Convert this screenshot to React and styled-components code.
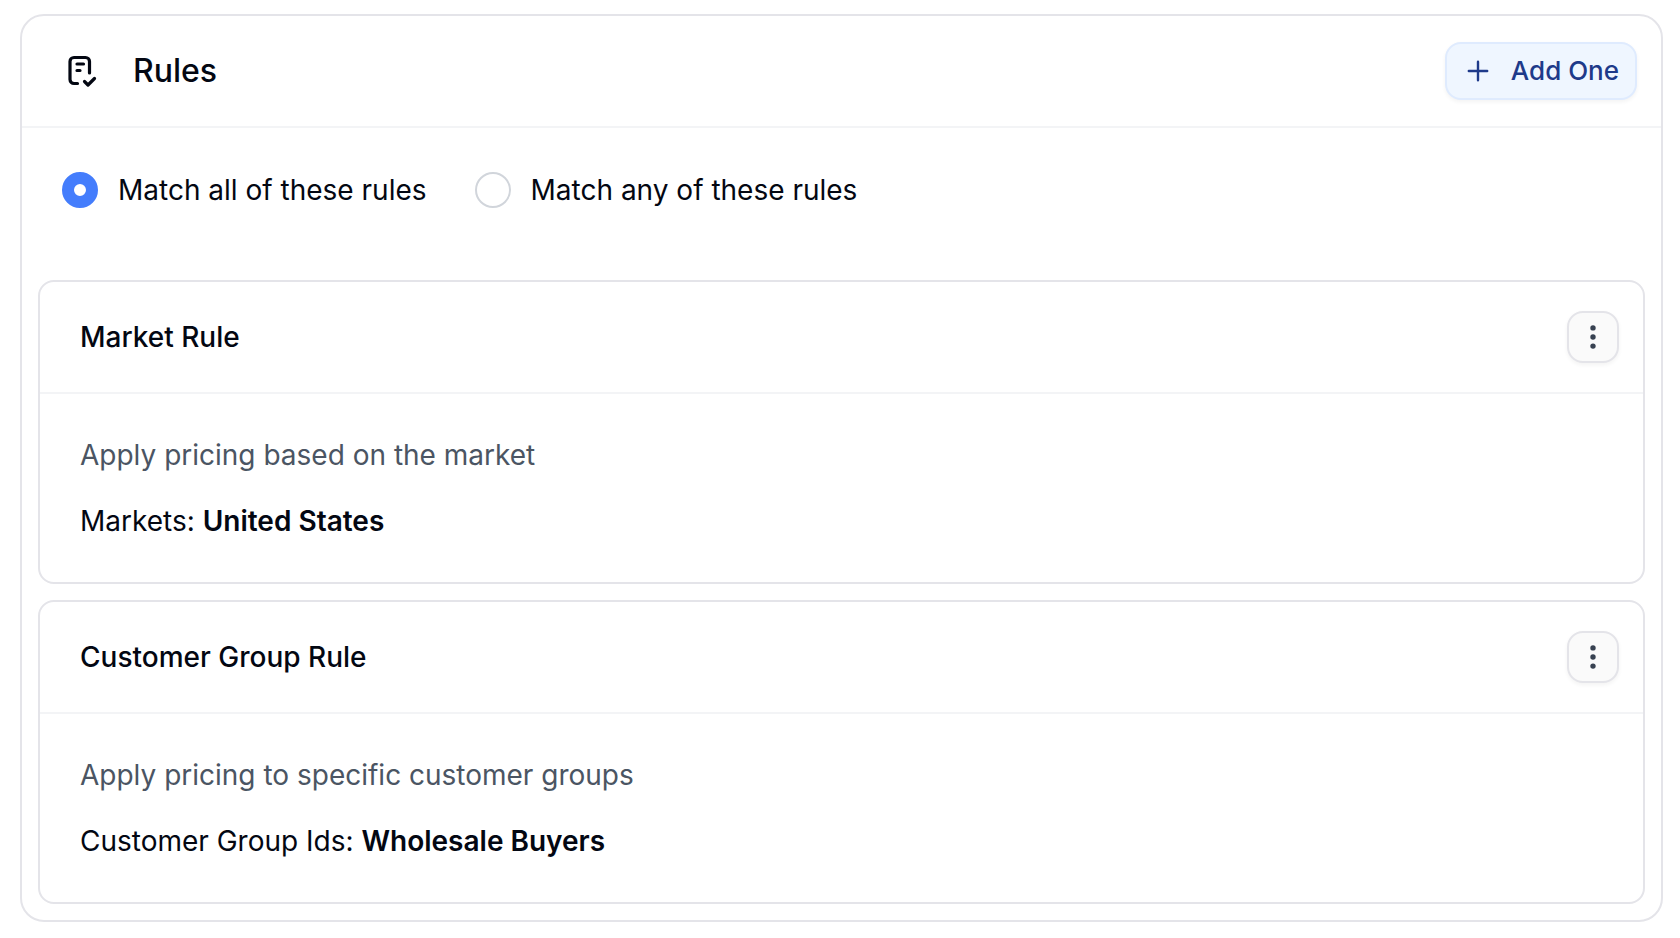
import { useState } from "react";
import styled, { createGlobalStyle } from "styled-components";

const rules = [
	{
		name: "Market Rule",
		description: "Apply pricing based on the market",
		label: "Markets",
		value: "United States",
	},
	{
		name: "Customer Group Rule",
		description: "Apply pricing to specific customer groups",
		label: "Customer Group Ids",
		value: "Wholesale Buyers",
	},
];

function RulesIcon() {
	return (
		<svg
			width="40"
			height="40"
			viewBox="0 0 40 40"
			fill="none"
			stroke="currentColor"
			strokeWidth="3.2"
			strokeLinecap="round"
			strokeLinejoin="round"
			aria-hidden="true"
		>
			<path d="M27.5 22V10.500a4 4 0 0 0-4-4h-11.500a4 4 0 0 0-4 4v18a4 4 0 0 0 4 4H15.500" />
			<path d="M15 13h6.500M15 19.500h3" />
			<path d="M22.500 30.500l3.500 3.500 6.500-6.500" />
		</svg>
	);
}

function PlusIcon() {
	return (
		<svg
			width="22"
			height="22"
			viewBox="0 0 22 22"
			fill="none"
			stroke="currentColor"
			strokeWidth="2.4"
			strokeLinecap="round"
			aria-hidden="true"
		>
			<path d="M11 1.800v18.400M1.800 11h18.400" />
		</svg>
	);
}

function DotsIcon() {
	return (
		<svg width="28" height="28" viewBox="0 0 28 28" fill="currentColor" aria-hidden="true">
			<circle cx="14" cy="4.900" r="2.7" />
			<circle cx="14" cy="14" r="2.7" />
			<circle cx="14" cy="23.100" r="2.7" />
		</svg>
	);
}

function RuleCard({ rule }) {
	return (
		<Rule>
			<Header>
				<h3>{rule.name}</h3>
				<MenuButton type="button" aria-label={`${rule.name} actions`}>
					<DotsIcon />
				</MenuButton>
			</Header>
			<RuleBody>
				<Description>{rule.description}</Description>
				<p>
					{rule.label}: <strong>{rule.value}</strong>
				</p>
			</RuleBody>
		</Rule>
	);
}

export default function App() {
	const [match, setMatch] = useState("all");
	return (
		<>
			<GlobalStyle />
			<Card>
				<Header>
					<Title>
						<RulesIcon />
						<h2>Rules</h2>
					</Title>
					<AddButton type="button">
						<PlusIcon />
						Add One
					</AddButton>
				</Header>
				<MatchOptions role="radiogroup" aria-label="Match rules">
					{["all", "any"].map((option) => (
						<Option key={option}>
							<Radio
								type="radio"
								name="match"
								value={option}
								checked={match === option}
								onChange={() => setMatch(option)}
							/>
							Match {option} of these rules
						</Option>
					))}
				</MatchOptions>
				<RuleList>
					{rules.map((rule) => (
						<RuleCard key={rule.name} rule={rule} />
					))}
				</RuleList>
			</Card>
		</>
	);
}

const GlobalStyle = createGlobalStyle`
	* {
		box-sizing: border-box;
	}
	body {
		margin: 0;
		background: #ffffff;
		color: #030712;
		font-family: Inter, "Liberation Sans", sans-serif;
		font-size: 28px;
		line-height: 42px;
	}
	h2, h3, p {
		margin: 0;
	}
	h2, h3 {
		font-weight: 500;
	}
	h2 {
		font-size: 32px;
	}
	h3 {
		font-size: 28px;
	}
	strong {
		font-weight: 600;
	}
	svg {
		display: block;
		flex-shrink: 0;
	}
`;

const Card = styled.section`
	margin: 14px 17px 16px 20px;
	border: 2px solid #e4e4e9;
	border-radius: 24px;
`;

const Header = styled.header`
	display: flex;
	align-items: center;
	justify-content: space-between;
	height: 112px;
	padding: 0 24px 0 40px;
	border-bottom: 2px solid #f3f4f6;
`;

const Title = styled.div`
	display: flex;
	align-items: center;
	gap: 31px;
`;

const AddButton = styled.button`
	display: flex;
	align-items: center;
	gap: 22px;
	height: 58px;
	padding: 0 16px 0 20px;
	border: 2px solid #dfebfe;
	border-radius: 16px;
	background: #eff6ff;
	box-shadow: 0 2px 4px rgba(0, 0, 0, 0.05);
	color: #1e3a8a;
	font: inherit;
	font-size: 26px;
	font-weight: 500;
	cursor: pointer;
`;

const MatchOptions = styled.div`
	display: flex;
	flex-wrap: wrap;
	gap: 48px;
	padding: 40px 40px 52px;
`;

const Option = styled.label`
	display: flex;
	align-items: center;
	gap: 20px;
	height: 44px;
	cursor: pointer;
`;

const Radio = styled.input`
	appearance: none;
	width: 36px;
	height: 36px;
	margin: 0;
	border: 2px solid #d1d5db;
	border-radius: 50%;
	background: #ffffff;
	cursor: pointer;
	&:checked {
		border: 12px solid #447dfc;
	}
`;

const RuleList = styled.div`
	display: flex;
	flex-direction: column;
	gap: 16px;
	padding: 16px;
`;

const Rule = styled.article`
	border: 2px solid #e4e4e9;
	border-radius: 16px;
`;

const RuleBody = styled.div`
	display: flex;
	flex-direction: column;
	gap: 24px;
	padding: 40px;
`;

const Description = styled.p`
	color: #4b5563;
`;

const MenuButton = styled.button`
	display: flex;
	align-items: center;
	justify-content: center;
	width: 52px;
	height: 52px;
	padding: 0;
	border: 2px solid #e4e4e9;
	border-radius: 16px;
	background: #fafafa;
	box-shadow: 0 2px 4px rgba(0, 0, 0, 0.05);
	color: #374151;
	cursor: pointer;
`;
